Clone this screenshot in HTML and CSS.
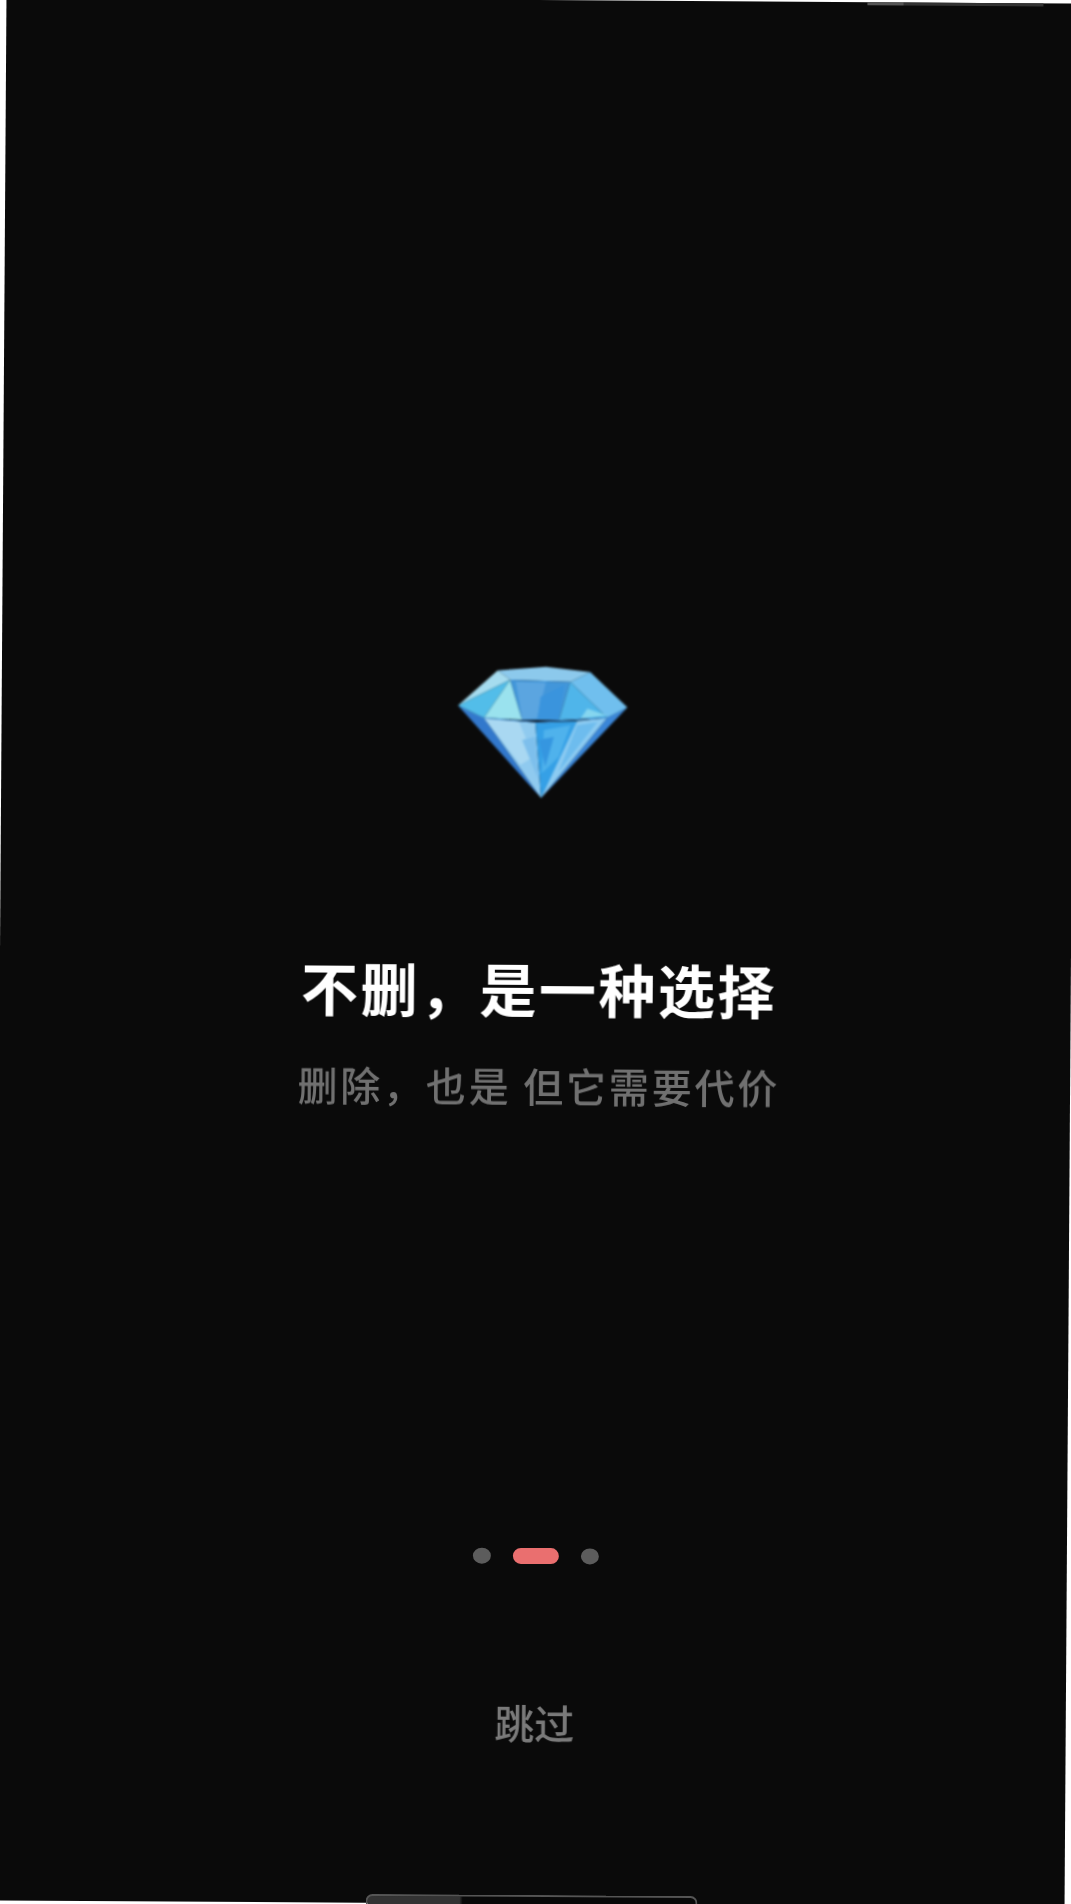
FILE: index.html
```html
<!DOCTYPE html>
<html lang="zh-CN">
<head>
<meta charset="utf-8">
<title>不删，是一种选择</title>
<link rel="stylesheet" href="styles.css">
</head>
<body>
<main class="screen">
  <div class="top-artifact"></div>
  <svg class="gem" viewBox="0 0 630 510" width="210" height="170" aria-hidden="true">
    <polygon fill="#3278cc" points="82,198 160,235 333,474"/>
    <polygon fill="#3a86d8" points="590,200 530,232 333,474"/>
    <polygon fill="#8fcaef" points="160,235 315,248 333,474"/>
    <polygon fill="#a9d8f2" points="160,235 265,245 310,350 270,375"/>
    <polygon fill="#7dbfec" points="275,300 315,290 325,420"/>
    <polygon fill="#35a0e6" points="315,248 450,242 333,474"/>
    <polygon fill="#4fb2ec" points="340,270 420,255 385,350 335,400"/>
    <polygon fill="#3596e0" points="325,300 370,290 345,380"/>
    <polygon fill="#8ccbf2" points="530,232 440,242 333,474"/>
    <polygon fill="#6dbcee" points="440,255 500,245 385,395"/>
    <polygon fill="#8cc9ec" points="200,92 345,80 478,95 418,125 238,120"/>
    <polygon fill="#a6dcef" points="82,198 200,92 238,120"/>
    <polygon fill="#52bde9" points="82,198 238,120 160,235"/>
    <polygon fill="#9ae2ee" points="238,120 160,235 275,240"/>
    <polygon fill="#4296da" points="238,120 418,125 385,240 275,240"/>
    <polygon fill="#5ba5e0" points="255,125 345,128 320,235 275,240"/>
    <polygon fill="#3a94dd" points="330,170 400,135 385,240 320,240"/>
    <polygon fill="#70bfee" points="418,125 478,95 590,200 530,232"/>
    <polygon fill="#4fb5ea" points="418,125 530,232 385,240"/>
    <polygon fill="#86d6ef" points="470,205 530,225 450,235"/>
    <polyline fill="none" stroke="#3f8ad0" stroke-width="3" points="95,210 160,235 320,247 530,232 585,205"/>
  </svg>
  <h1 class="title">不删，是一种选择</h1>
  <p class="subtitle">删除，也是 但它需要代价</p>
  <div class="dots">
    <span class="dot"></span>
    <span class="dot dot-active"></span>
    <span class="dot"></span>
  </div>
  <div class="skip">跳过</div>
  <div class="bottom-bar"></div>
</main>
</body>
</html>
```
FILE: styles.css
```css
html, body {
  margin: 0;
  padding: 0;
  background: #ffffff;
  overflow: hidden;
}
.screen {
  position: relative;
  box-sizing: border-box;
  width: 1071px;
  height: 1904px;
  padding-top: 640px;
  background: #0a0a0a;
  display: flex;
  flex-direction: column;
  align-items: center;
  font-family: "Noto Sans CJK SC", "Noto Sans", sans-serif;
  transform: rotate(0.39deg);
}
.top-artifact {
  position: absolute;
  top: 0;
  left: 861px;
  width: 176px;
  height: 3px;
  background: linear-gradient(90deg, #555 0, #555 20%, #333 21%, #333 100%);
}
.gem {
  display: block;
  margin-left: -3px;
  filter: blur(1.1px);
}
.title {
  margin: 141.5px 0 0;
  font-size: 57px;
  line-height: 70px;
  font-weight: 700;
  letter-spacing: 2.5px;
  color: #ffffff;
  text-indent: 7.5px;
  filter: blur(0.5px);
}
.subtitle {
  margin: 38.5px 0 0;
  font-size: 40px;
  line-height: 50px;
  font-weight: 500;
  letter-spacing: 2.8px;
  color: #707070;
  text-indent: 8.5px;
  filter: blur(0.5px);
}
.dots {
  margin-top: 438px;
  margin-left: 9px;
  display: flex;
  align-items: center;
  gap: 22px;
}
.dot {
  width: 18px;
  height: 16px;
  border-radius: 50%;
  background: #5c5c5c;
}
.dot-active {
  width: 46px;
  border-radius: 8px;
  background: #ea6f6f;
}
.skip {
  margin-top: 133px;
  margin-left: 8px;
  font-size: 40px;
  line-height: 50px;
  font-weight: 500;
  color: #7a7a7a;
  filter: blur(0.5px);
}
.bottom-bar {
  position: absolute;
  left: 372px;
  bottom: -4px;
  width: 332px;
  height: 13px;
  box-sizing: border-box;
  border: 2px solid #555;
  border-bottom: 0;
  border-radius: 7px 7px 0 0;
  background: linear-gradient(90deg, #333 0, #333 28%, #080808 29%, #080808 100%);
}
```
